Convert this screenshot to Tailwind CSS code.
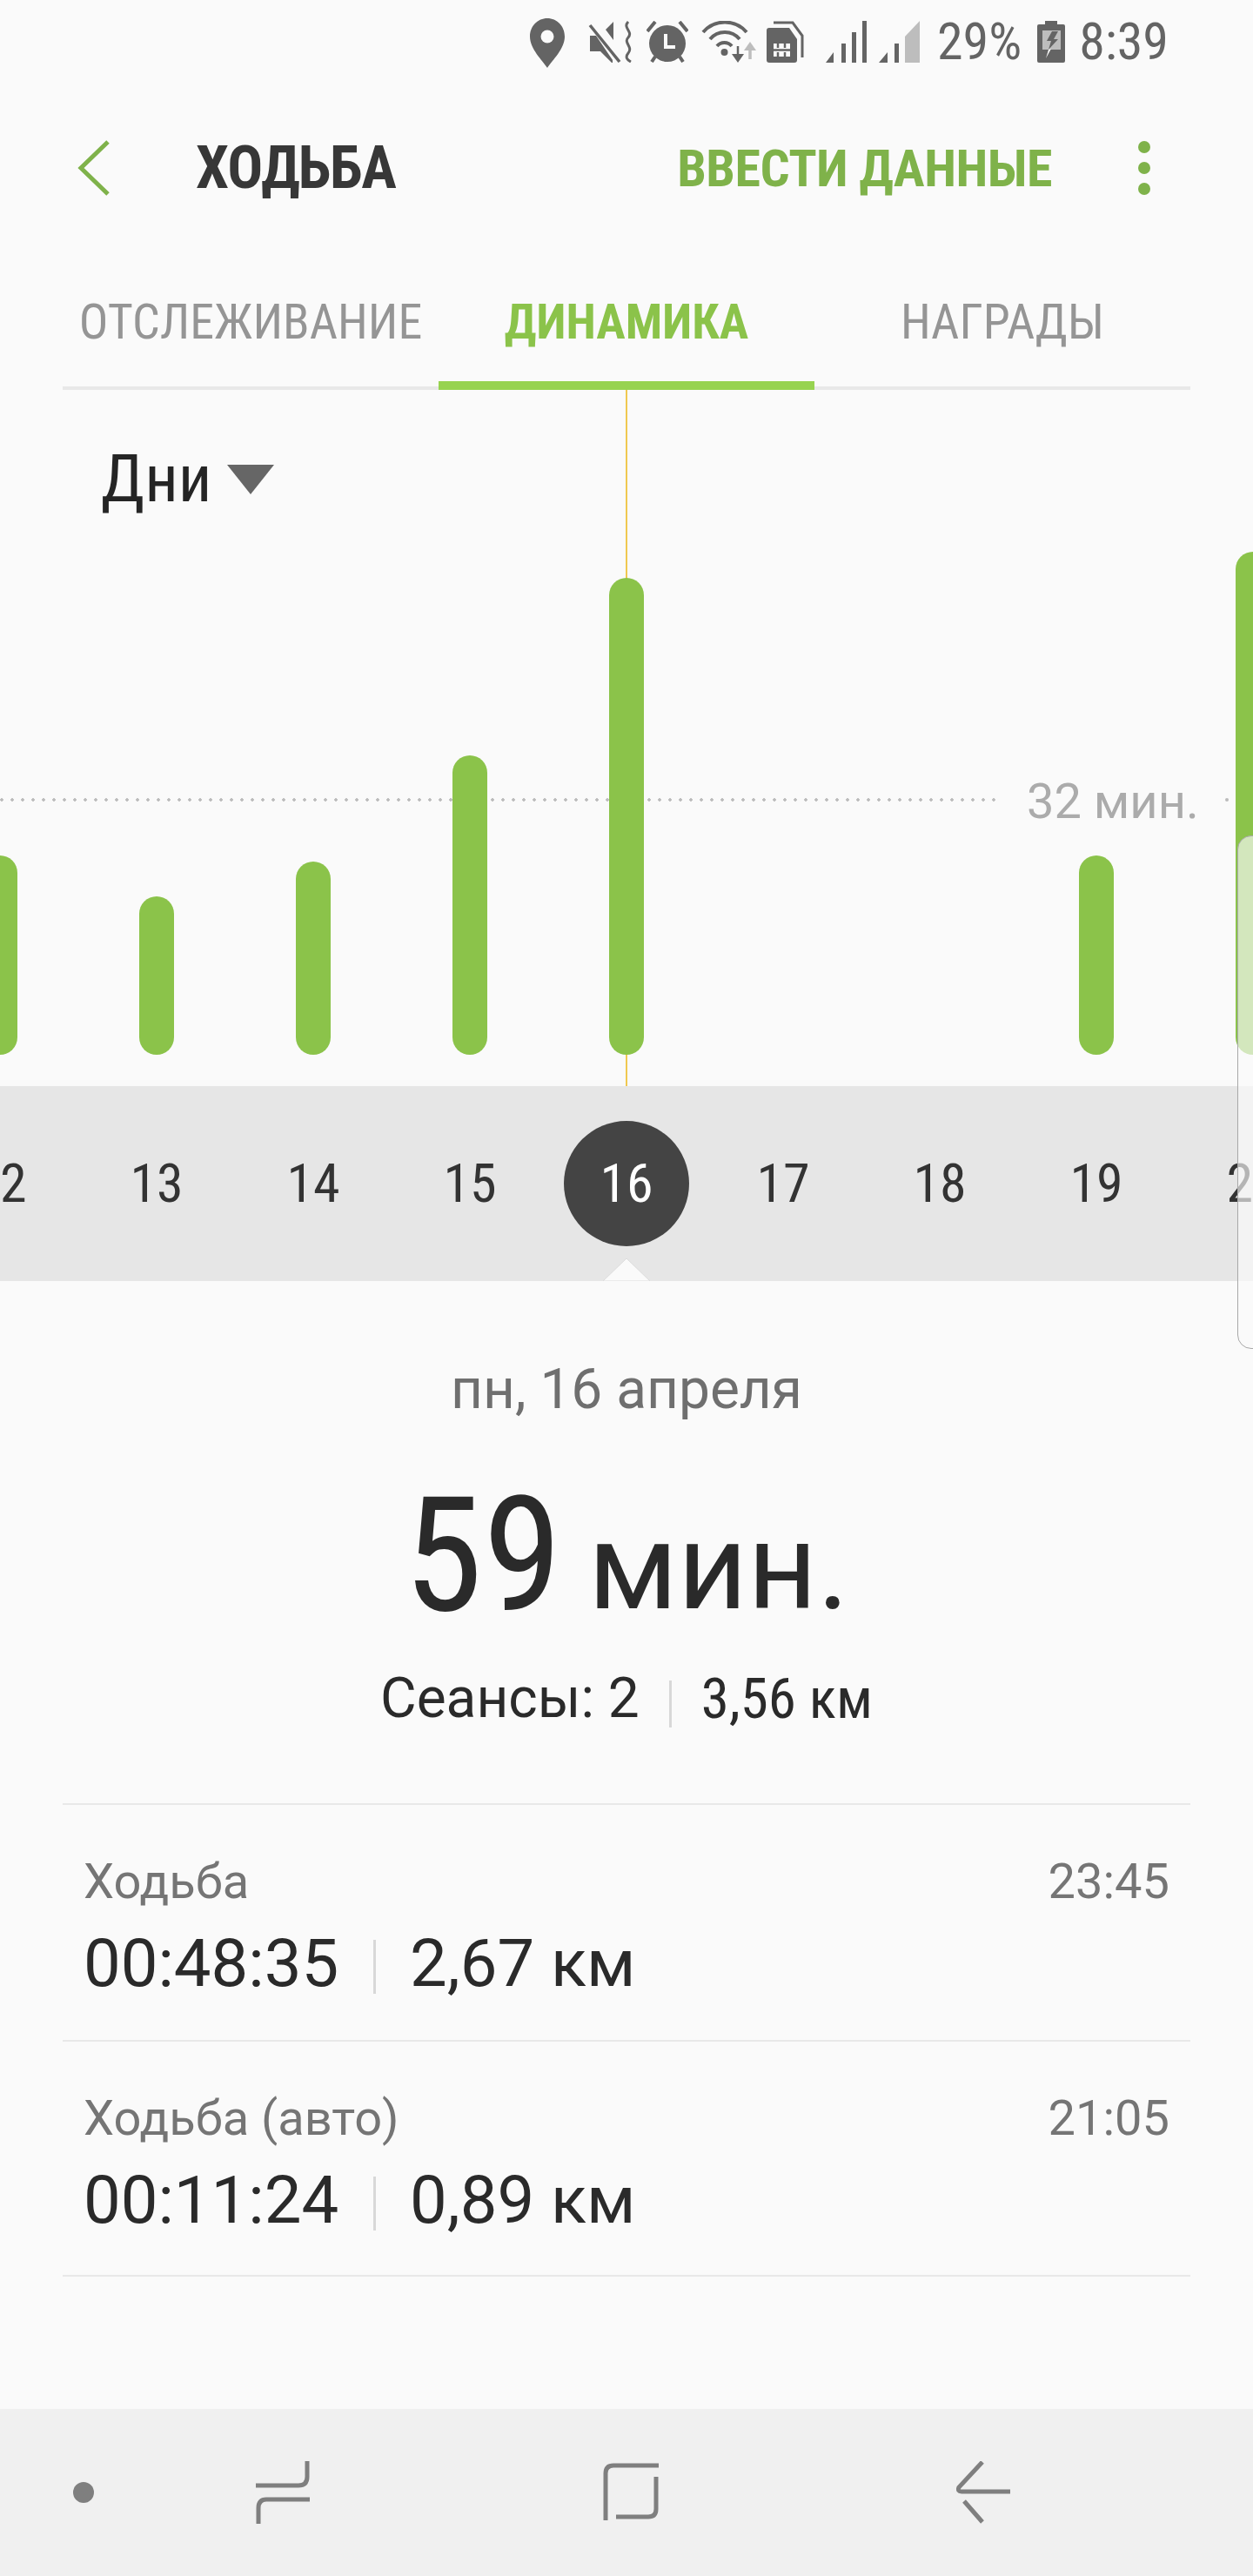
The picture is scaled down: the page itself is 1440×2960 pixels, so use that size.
<!doctype html>
<html><head><meta charset="utf-8"><title>Ходьба</title><script src="https://cdn.jsdelivr.net/npm/@tailwindcss/browser@4"></script></head>
<body>
<div class="relative flex h-[2960px] w-[1440px] flex-col overflow-hidden bg-[#fafafa] font-['Roboto',sans-serif] text-[#2a2a2a]">

  <!-- status bar -->
  <div class="flex h-[96px] items-center justify-end pr-[97px] text-[#646464]">
    <svg class="mb-[-2px] h-[57px] w-[40px]" viewBox="0 0 40 57"><path fill="#646464" d="M20 0C9 0 0 9 0 21c0 14 14 27 20 36 6-9 20-22 20-36C40 9 31 0 20 0z"/><circle cx="20" cy="21" r="7.5" fill="#fafafa"/></svg>
    <svg class="ml-[27px] h-[48px] w-[51px]" viewBox="0 0 51 48"><path fill="#646464" d="M2 17h7l19 28v3h-1L14 35H2zM29 1v21l-9-12z"/><path stroke="#646464" stroke-width="3.5" fill="none" d="M2 5l34 42"/><path stroke="#646464" stroke-width="3" fill="none" d="M46 1c-7 7 6 11 0 18-6 6 6 11 0 18-4 5-1 8 3 10"/></svg>
    <svg class="ml-[16px] h-[48px] w-[48px]" viewBox="0 0 48 48"><circle cx="24" cy="26" r="21" fill="#646464"/><path d="M22 15v15h11" stroke="#fafafa" stroke-width="4" fill="none"/><path d="M1 12L10 1M47 12L38 1" stroke="#646464" stroke-width="4"/><path d="M6 47l4-6M42 47l-4-6" stroke="#646464" stroke-width="4"/></svg>
    <svg class="ml-[14px] h-[48px] w-[66px]" viewBox="0 0 66 48"><path d="M3 13A33 33 0 0 1 53 13M11 21A22 22 0 0 1 45 21M19 29A11 11 0 0 1 36 29" stroke="#646464" stroke-width="4" fill="none"/><circle cx="27.500" cy="36" r="4" fill="#646464"/><path d="M43 29v14" stroke="#646464" stroke-width="2.500"/><path d="M36 38h14l-7 10z" fill="#646464"/><path d="M57 30v14" stroke="#bdbdbd" stroke-width="3.500"/><path d="M50 34h14l-7-10z" fill="#bdbdbd"/></svg>
    <svg class="ml-[10px] h-[48px] w-[43px]" viewBox="0 0 43 48"><path d="M8 2h22l11 15v25" stroke="#646464" stroke-width="3" fill="none"/><path d="M3 8h23l9 13v24a3 3 0 0 1-3 3H3a3 3 0 0 1-3-3V11a3 3 0 0 1 3-3z" fill="#646464"/><rect x="8" y="26" width="19" height="15" fill="#fafafa"/><path d="M13 26v5M13 36v5M21 26v5M21 36v5M8 33.500h19" stroke="#646464" stroke-width="2.500"/></svg>
    <svg class="ml-[25px] h-[48px] w-[47px]" viewBox="0 0 47 48"><path fill="#646464" d="M0 48L9 36V48zM18 26h5v22h-5zM30 13h5v35h-5zM42 0h5v48h-5z"/></svg>
    <svg class="ml-[14px] h-[48px] w-[47px]" viewBox="0 0 47 48"><path fill="#646464" d="M0 48L10 36V48zM18 26h5v22h-5z"/><path fill="#bdbdbd" d="M30 18L47 0V48H30z"/></svg>
    <span class="ml-[20px] text-[60px] leading-[60px] [font-stretch:75%]">29%</span>
    <svg class="ml-[18px] h-[48px] w-[32px]" viewBox="0 0 32 48"><path fill="#646464" d="M9 0h14v4h7a2 2 0 0 1 2 2v40a2 2 0 0 1-2 2H2a2 2 0 0 1-2-2V6a2 2 0 0 1 2-2h7z"/><rect x="6" y="11" width="21" height="22" fill="#bdbdbd"/><path fill="#646464" d="M17 12h7l-5 9h5L13 33l3-10h-5z"/><path fill="#fafafa" d="M13 33l3-1-6 11z"/></svg>
    <span class="ml-[16px] text-[60px] leading-[60px] [font-stretch:75%]">8:39</span>
  </div>

  <!-- action bar -->
  <div class="flex h-[194px] items-center">
    <svg class="ml-[88px] h-[66px] w-[40px]" viewBox="0 0 40 66"><path d="M36 3L5 33l31 30" stroke="#7fb24a" stroke-width="5" fill="none"/></svg>
    <h1 class="ml-[97px] text-[68px] leading-[80px] font-bold tracking-[-1px] text-[#373737] [font-stretch:75%]">ХОДЬБА</h1>
    <span class="mt-[2px] ml-auto text-[60px] leading-[80px] font-bold tracking-[-0.5px] text-[#7fb24a] [font-stretch:75%]">ВВЕСТИ ДАННЫЕ</span>
    <div class="mr-[118px] ml-[99px] flex flex-col gap-[10px]">
      <span class="h-[14px] w-[14px] rounded-full bg-[#7fb24a]"></span>
      <span class="h-[14px] w-[14px] rounded-full bg-[#7fb24a]"></span>
      <span class="h-[14px] w-[14px] rounded-full bg-[#7fb24a]"></span>
    </div>
  </div>

  <!-- tabs -->
  <div class="mx-[72px] grid grid-cols-3 border-b-4 border-[#e8e8e8] text-center text-[56px] leading-[60px] [font-stretch:75%]">
    <div class="flex h-[154px] items-center justify-center pt-[6px] text-[#959595]">ОТСЛЕЖИВАНИЕ</div>
    <div class="relative flex h-[154px] items-center justify-center pt-[6px] font-bold text-[#8bc34a]">ДИНАМИКА<span class="absolute inset-x-0 bottom-[-4px] h-[10px] bg-[#97d350]"></span></div>
    <div class="flex h-[154px] items-center justify-center pt-[6px] text-[#959595]">НАГРАДЫ</div>
  </div>

  <!-- chart -->
  <div class="relative grid h-[800px]">
    <span class="absolute top-0 bottom-0 left-[719px] w-[2px] bg-[#f0c850]"></span>
    <span class="absolute top-[469px] left-[-4px] h-[4px] w-[1152px] bg-[radial-gradient(circle,#bbbbbb_1.5px,transparent_2px)] bg-[length:12px_4px]"></span>
    <span class="absolute top-[469px] left-[1408px] h-[4px] w-[4px] rounded-full bg-[#bbbbbb]"></span>
    <span class="absolute top-[443px] left-[1180px] text-[56px] leading-[60px] text-[#ababab]">32 мин.</span>
    <div class="relative col-start-1 row-start-1 flex items-center self-start pt-[62px] pl-[116px]">
      <span class="text-[76px] leading-[80px] text-[#252525] [font-stretch:75%]">Дни</span>
      <svg class="mt-[2px] ml-[17px] h-[34px] w-[54px]" viewBox="0 0 54 34"><path fill="#666" d="M0 0h54L27 34z"/></svg>
    </div>
    <div class="relative col-start-1 row-start-1 ml-[-90px] flex items-end self-end pb-[36px]">
      <div class="flex w-[180px] justify-center"><span class="h-[229px] w-[40px] rounded-[20px] bg-[#8bc34a]"></span></div>
      <div class="flex w-[180px] justify-center"><span class="h-[182px] w-[40px] rounded-[20px] bg-[#8bc34a]"></span></div>
      <div class="flex w-[180px] justify-center"><span class="h-[222px] w-[40px] rounded-[20px] bg-[#8bc34a]"></span></div>
      <div class="flex w-[180px] justify-center"><span class="h-[344px] w-[40px] rounded-[20px] bg-[#8bc34a]"></span></div>
      <div class="flex w-[180px] justify-center"><span class="h-[548px] w-[40px] rounded-[20px] bg-[#8bc34a]"></span></div>
      <div class="w-[180px]"></div>
      <div class="w-[180px]"></div>
      <div class="flex w-[180px] justify-center"><span class="h-[229px] w-[40px] rounded-[20px] bg-[#8bc34a]"></span></div>
      <div class="flex w-[180px] justify-center"><span class="h-[578px] w-[40px] rounded-[20px] bg-[#8bc34a]"></span></div>
    </div>
  </div>

  <!-- day strip -->
  <div class="relative ml-[-90px] flex h-[224px] w-[1620px] items-center bg-[#e6e6e6] text-center text-[62px] leading-[70px] text-[#333] [font-stretch:75%]">
    <div class="w-[180px]">12</div>
    <div class="w-[180px]">13</div>
    <div class="w-[180px]">14</div>
    <div class="w-[180px]">15</div>
    <div class="flex w-[180px] justify-center"><span class="flex h-[144px] w-[144px] items-center justify-center rounded-full bg-[#444] text-white">16</span></div>
    <div class="w-[180px]">17</div>
    <div class="w-[180px]">18</div>
    <div class="w-[180px]">19</div>
    <div class="w-[180px]">20</div>
    <svg class="absolute bottom-0 left-[783px] h-[26px] w-[54px]" viewBox="0 0 54 26"><path fill="#fafafa" stroke="#dcdcdc" stroke-width="1" d="M0 26L27 0l27 26z"/></svg>
  </div>

  <!-- summary -->
  <div class="flex flex-col items-center pt-[95px]">
    <div class="text-[64px] leading-[60px] text-[#6f6f6f]">пн, 16 апреля</div>
    <div class="mt-[60px] flex h-[200px] items-center">
      <span class="text-[184px] leading-[200px] [font-stretch:75%]">59</span>
      <span class="mt-[28px] ml-[30px] text-[139px] leading-[200px]">мин.</span>
    </div>
    <div class="mt-[30px] flex h-[70px] items-center text-[64px] leading-[70px]">
      <span>Сеансы: 2</span>
      <span class="mt-[12px] mr-[34px] ml-[34px] h-[54px] w-[3px] bg-[#d8d8d8]"></span>
      <span class="text-[65px] [font-stretch:75%]">3,56 км</span>
    </div>
  </div>

  <!-- sessions -->
  <div class="mx-[72px] mt-[85px] border-b-2 border-[#e8e8e8]">
    <div class="h-[272px] border-t-2 border-[#e8e8e8] px-[24px] pt-[58px]">
      <div class="flex justify-between text-[56px] leading-[60px] text-[#757575]"><span>Ходьба</span><span>23:45</span></div>
      <div class="mt-[24px] flex items-center text-[76px] leading-[80px]"><span>00:48:35</span><span class="mt-[8px] mr-[39px] ml-[40px] h-[62px] w-[3px] bg-[#d8d8d8]"></span><span>2,67 км</span></div>
    </div>
    <div class="h-[270px] border-t-2 border-[#e8e8e8] px-[24px] pt-[58px]">
      <div class="flex justify-between text-[56px] leading-[60px] text-[#757575]"><span>Ходьба (авто)</span><span>21:05</span></div>
      <div class="mt-[24px] flex items-center text-[76px] leading-[80px]"><span>00:11:24</span><span class="mt-[8px] mr-[39px] ml-[40px] h-[62px] w-[3px] bg-[#d8d8d8]"></span><span>0,89 км</span></div>
    </div>
  </div>

  <!-- navigation bar -->
  <div class="mt-auto flex h-[192px] items-center bg-[#f0f0f0]">
    <span class="ml-[84px] h-[24px] w-[24px] rounded-full bg-[#7f7f7f]"></span>
    <svg class="ml-[186px] h-[72px] w-[62px]" viewBox="0 0 62 72"><path d="M59 0V18Q59 28 49 28H0M62 44H12Q3 44 3 54V72" stroke="#7f7f7f" stroke-width="5" fill="none"/></svg>
    <svg class="ml-[337px] h-[68px] w-[64px]" viewBox="0 0 64 68"><path d="M64 3H12Q3 3 3 12V66M61 16V53Q61 62 52 62H15" stroke="#7f7f7f" stroke-width="5" fill="none"/></svg>
    <svg class="ml-[342px] h-[72px] w-[62px]" viewBox="0 0 62 72"><path d="M30 1L3 30Q1 35 6 35H62M9 46L30 70" stroke="#7f7f7f" stroke-width="5" fill="none"/></svg>
  </div>

  <!-- edge panel handle over the page -->
  <div class="absolute top-[960px] left-[1422px] h-[590px] w-[40px] rounded-l-[16px] border border-[#a8a8a8] bg-[#fafafa]/65"></div>
</div>
</body></html>
